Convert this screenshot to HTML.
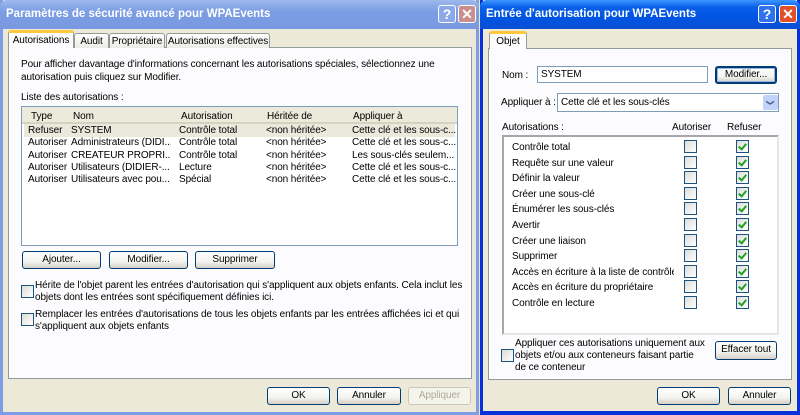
<!DOCTYPE html>
<html><head><meta charset="utf-8"><style>
*{margin:0;padding:0;box-sizing:border-box}
body{width:800px;height:415px;overflow:hidden;background:#ece9d8;font-family:"Liberation Sans",sans-serif;font-size:10px;letter-spacing:-0.1px;color:#000;position:relative}
.a{position:absolute;white-space:nowrap}
.win{position:absolute;background:#ece9d8}
.title{position:absolute;left:0;top:0;right:0;height:29px;border-radius:7px 7px 0 0;color:#fff;font-weight:bold;font-size:11.5px;letter-spacing:0;padding:8px 0 0 6px;white-space:nowrap}
.btn{position:absolute;border:1px solid #003c74;border-radius:3px;background:linear-gradient(#fff,#f3f3ef 60%,#d6d0c5);text-align:center;line-height:16px;white-space:nowrap}
.dis{border-color:#c9c7ba;color:#aca899;background:#f5f4ea}
.panel{position:absolute;background:#fcfcfe;border:1px solid #919b9c}
.tab{position:absolute;border:1px solid #919b9c;border-bottom:none;border-radius:3px 3px 0 0;background:linear-gradient(#fff,#ecebe6);padding:2px 0 0 0;height:15px;text-align:center;white-space:nowrap;overflow:hidden}
.tab.sel{border-top:3px solid #ffc83c;background:#fcfcfe;height:18px;padding-top:2px;z-index:2}
.cb{position:absolute;width:13px;height:13px;border:1px solid #1c5180;background:linear-gradient(135deg,#dcdcd7,#fff)}
.cb.c::after{content:"";position:absolute;left:3px;top:1px;width:3px;height:6px;border:solid #21a121;border-width:0 2px 2px 0;transform:rotate(40deg)}
.tb{position:absolute;top:5px;width:18px;height:18px;border:1px solid #fff;border-radius:3px;color:#fff;font-weight:bold;font-size:14px;text-align:center;line-height:16px}
.col{position:absolute;white-space:nowrap;overflow:hidden;line-height:12.3px}
</style></head><body>
<!-- left window -->
<div class="win" style="left:0;top:0;width:479px;height:415px;border:3px solid #7f9ce6;border-top:none">
 <div class="title" style="left:-3px;right:-3px;background:linear-gradient(#9db9eb,#7b9de3 40%,#7a99e0)">Paramètres de sécurité avancé pour WPAEvents</div>
 <div class="tb" style="left:435px;background:#8aa8ea">?</div>
 <div class="tb" style="left:455px;background:#c98f8f">✕</div>
</div>
<div class="panel" style="left:8px;top:47px;width:464px;height:332px"></div>
<div class="tab sel" style="left:8px;top:30px;width:66px">Autorisations</div>
<div class="tab" style="left:74px;top:33px;width:35px">Audit</div>
<div class="tab" style="left:109px;top:33px;width:56px">Propriétaire</div>
<div class="tab" style="left:166px;top:33px;width:104px">Autorisations effectives</div>
<div class="a" style="left:21px;top:59px">Pour afficher davantage d'informations concernant les autorisations spéciales, sélectionnez une</div>
<div class="a" style="left:21px;top:72px">autorisation puis cliquez sur Modifier.</div>
<div class="a" style="left:21px;top:92px">Liste des autorisations :</div>
<div style="position:absolute;left:21px;top:106px;width:437px;height:140px;border:1px solid #7f9db9;background:#fff"></div>
<div style="position:absolute;left:22px;top:107px;width:435px;height:17px;background:#ebeadb;border-bottom:2px solid #d6d2c2"></div>
<div class="a" style="left:31px;top:111px">Type</div><div class="a" style="left:73px;top:111px">Nom</div><div class="a" style="left:181px;top:111px">Autorisation</div><div class="a" style="left:267px;top:111px">Héritée de</div><div class="a" style="left:353px;top:111px">Appliquer à</div>
<div style="position:absolute;left:24px;top:124px;width:431px;height:13px;background:#ebe9dc"></div>
<div class="col" style="left:28px;top:125px;width:42px">Refuser<br>Autoriser<br>Autoriser<br>Autoriser<br>Autoriser</div>
<div class="col" style="left:71px;top:125px;width:100px">SYSTEM<br>Administrateurs (DIDI...<br>CREATEUR PROPRI...<br>Utilisateurs (DIDIER-...<br>Utilisateurs avec pou...</div>
<div class="col" style="left:179px;top:125px;width:80px">Contrôle total<br>Contrôle total<br>Contrôle total<br>Lecture<br>Spécial</div>
<div class="col" style="left:266px;top:125px;width:80px">&lt;non héritée&gt;<br>&lt;non héritée&gt;<br>&lt;non héritée&gt;<br>&lt;non héritée&gt;<br>&lt;non héritée&gt;</div>
<div class="col" style="left:352px;top:125px;width:104px">Cette clé et les sous-c...<br>Cette clé et les sous-c...<br>Les sous-clés seulem...<br>Cette clé et les sous-c...<br>Cette clé et les sous-c...</div>
<div class="btn" style="left:22px;top:251px;width:79px;height:18px">Ajouter...</div>
<div class="btn" style="left:109px;top:251px;width:79px;height:18px">Modifier...</div>
<div class="btn" style="left:195px;top:251px;width:80px;height:18px">Supprimer</div>
<div class="cb" style="left:21px;top:285px"></div>
<div class="a" style="left:35px;top:280px;line-height:12px">Hérite de l'objet parent les entrées d'autorisation qui s'appliquent aux objets enfants. Cela inclut les<br>objets dont les entrées sont spécifiquement définies ici.</div>
<div class="cb" style="left:21px;top:313px"></div>
<div class="a" style="left:35px;top:309px;line-height:12px">Remplacer les entrées d'autorisations de tous les objets enfants par les entrées affichées ici et qui<br>s'appliquent aux objets enfants</div>
<div class="btn" style="left:267px;top:387px;width:63px;height:18px">OK</div>
<div class="btn" style="left:337px;top:387px;width:64px;height:18px">Annuler</div>
<div class="btn dis" style="left:408px;top:387px;width:63px;height:18px">Appliquer</div>

<!-- right window -->
<div class="win" style="left:480px;top:0;width:320px;height:415px;border:3px solid #0831d9;border-top:none;border-bottom-width:4px">
 <div class="title" style="left:-3px;right:-3px;background:linear-gradient(#3d95ff,#0a5fe8 25%,#0054e3 60%,#0b4fd3)">Entrée d'autorisation pour WPAEvents</div>
 <div class="tb" style="left:275px;background:#2f72f0">?</div>
 <div class="tb" style="left:296px;background:#e0502a">✕</div>
</div>
<div class="panel" style="left:488px;top:48px;width:304px;height:332px"></div>
<div class="tab sel" style="left:489px;top:31px;width:38px">Objet</div>
<div class="a" style="left:502px;top:70px">Nom :</div>
<div style="position:absolute;left:537px;top:66px;width:171px;height:17px;border:1px solid #7f9db9;background:#fff;padding:2px 3px">SYSTEM</div>
<div class="btn" style="left:715px;top:66px;width:62px;height:18px;border-width:2px;border-color:#003c74;box-shadow:inset 0 0 0 1px #98b4e8;line-height:14px">Modifier...</div>
<div class="a" style="left:501px;top:97px">Appliquer à :</div>
<div style="position:absolute;left:557px;top:93px;width:222px;height:19px;border:1px solid #7f9db9;background:#fff;padding:3px 3px">Cette clé et les sous-clés</div>
<div style="position:absolute;left:763px;top:95px;width:15px;height:15px;background:#c1d3fb;border-radius:2px;color:#4d6185;font-size:8px;text-align:center;line-height:15px"><span style="display:inline-block;transform:rotate(90deg)">&#10095;</span></div>
<div class="a" style="left:502px;top:122px">Autorisations :</div>
<div class="a" style="left:672px;top:122px">Autoriser</div>
<div class="a" style="left:727px;top:122px">Refuser</div>
<div style="position:absolute;left:502px;top:135px;width:277px;height:200px;border:2px solid #a7a6aa;border-right-color:#e6e6e6;border-bottom-color:#e6e6e6;background:#fff"></div>
<div class="col" style="left:512px;top:140px;line-height:15.6px;width:162px">Contrôle total<br>Requête sur une valeur<br>Définir la valeur<br>Créer une sous-clé<br>Énumérer les sous-clés<br>Avertir<br>Créer une liaison<br>Supprimer<br>Accès en écriture à la liste de contrôle d<br>Accès en écriture du propriétaire<br>Contrôle en lecture</div>
<div class="cb" style="left:684px;top:140px"></div><div class="cb c" style="left:736px;top:140px"></div>
<div class="cb" style="left:684px;top:156px"></div><div class="cb c" style="left:736px;top:156px"></div>
<div class="cb" style="left:684px;top:171px"></div><div class="cb c" style="left:736px;top:171px"></div>
<div class="cb" style="left:684px;top:187px"></div><div class="cb c" style="left:736px;top:187px"></div>
<div class="cb" style="left:684px;top:202px"></div><div class="cb c" style="left:736px;top:202px"></div>
<div class="cb" style="left:684px;top:218px"></div><div class="cb c" style="left:736px;top:218px"></div>
<div class="cb" style="left:684px;top:234px"></div><div class="cb c" style="left:736px;top:234px"></div>
<div class="cb" style="left:684px;top:249px"></div><div class="cb c" style="left:736px;top:249px"></div>
<div class="cb" style="left:684px;top:265px"></div><div class="cb c" style="left:736px;top:265px"></div>
<div class="cb" style="left:684px;top:280px"></div><div class="cb c" style="left:736px;top:280px"></div>
<div class="cb" style="left:684px;top:296px"></div><div class="cb c" style="left:736px;top:296px"></div>
<div class="cb" style="left:501px;top:349px"></div>
<div class="a" style="left:515px;top:338px;line-height:12px">Appliquer ces autorisations uniquement aux<br>objets et/ou aux conteneurs faisant partie<br>de ce conteneur</div>
<div class="btn" style="left:715px;top:341px;width:62px;height:19px">Effacer tout</div>
<div class="btn" style="left:657px;top:387px;width:63px;height:18px">OK</div>
<div class="btn" style="left:728px;top:387px;width:63px;height:18px">Annuler</div>
</body></html>
